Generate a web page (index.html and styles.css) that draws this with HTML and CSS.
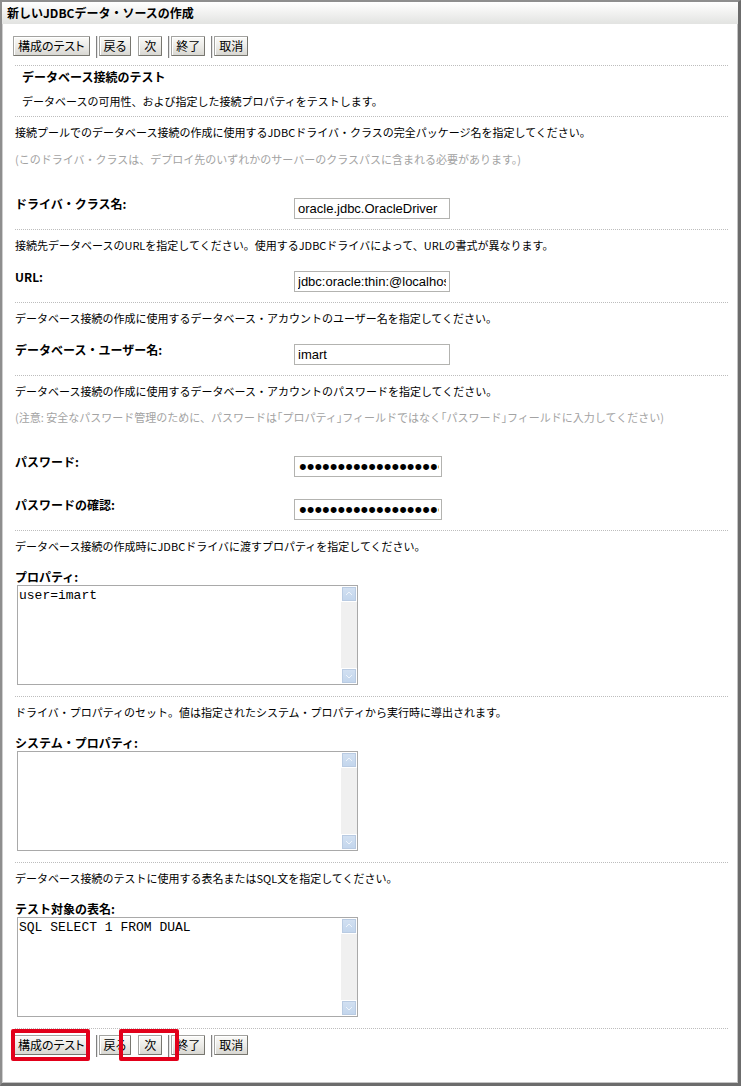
FILE: index.html
```html
<!DOCTYPE html>
<html lang="ja">
<head>
    <meta charset="UTF-8">
    <title>新しいJDBCデータ・ソースの作成</title>
    <link rel="stylesheet" href="styles.css">
</head>
<body>

<div class="window">
    <div class="titlebar">新しいJDBCデータ・ソースの作成</div>

    <div class="content">
        <div class="toolbar">
            <button class="btn">構成のテスト</button>
            <span class="divider"></span>
            <button class="btn">戻る</button>
            <button class="btn btn-next">次</button>
            <span class="divider"></span>
            <button class="btn">終了</button>
            <span class="divider"></span>
            <button class="btn">取消</button>
        </div>

        <div class="sep"></div>
        <div class="intro">
            <h2>データベース接続のテスト</h2>
            <p>データベースの可用性、および指定した接続プロパティをテストします。</p>
        </div>

        <!-- driver class -->
        <div class="sep"></div>
        <p class="desc">接続プールでのデータベース接続の作成に使用するJDBCドライバ・クラスの完全パッケージ名を指定してください。</p>
        <p class="note">(このドライバ・クラスは、デプロイ先のいずれかのサーバーのクラスパスに含まれる必要があります。)</p>
        <div class="field after-note">
            <label for="driver">ドライバ・クラス名:</label>
            <input type="text" id="driver" class="text-input" value="oracle.jdbc.OracleDriver">
        </div>

        <!-- url -->
        <div class="sep"></div>
        <p class="desc">接続先データベースのURLを指定してください。使用するJDBCドライバによって、URLの書式が異なります。</p>
        <div class="field">
            <label for="url">URL:</label>
            <input type="text" id="url" class="text-input" value="jdbc:oracle:thin:@localhost:1521:orcl">
        </div>

        <!-- user -->
        <div class="sep"></div>
        <p class="desc">データベース接続の作成に使用するデータベース・アカウントのユーザー名を指定してください。</p>
        <div class="field">
            <label for="user">データベース・ユーザー名:</label>
            <input type="text" id="user" class="text-input" value="imart">
        </div>

        <!-- password -->
        <div class="sep"></div>
        <p class="desc">データベース接続の作成に使用するデータベース・アカウントのパスワードを指定してください。</p>
        <p class="note note-tight">(注意: 安全なパスワード管理のために、パスワードは<span class="kakko">「プロパティ」</span>フィールドではなく<span class="kakko">「パスワード」</span>フィールドに入力してください)</p>
        <div class="field after-note field-pair">
            <label for="pass">パスワード:</label>
            <input type="password" id="pass" class="text-input pass-input" value="imartimartimartimart">
        </div>
        <div class="field">
            <label for="pass2">パスワードの確認:</label>
            <input type="password" id="pass2" class="text-input pass-input" value="imartimartimartimart">
        </div>

        <!-- properties -->
        <div class="sep"></div>
        <p class="desc">データベース接続の作成時にJDBCドライバに渡すプロパティを指定してください。</p>
        <div class="area-field">
            <label for="props">プロパティ:</label>
            <div class="textbox">
                <textarea id="props">user=imart</textarea>
                <div class="scrollbar">
                    <span class="scroll-btn"><svg width="14" height="14" viewBox="0 0 14 14"><path d="M4 8 L7 5 L10 8" fill="none" stroke="#eef4fb" stroke-width="1"/></svg></span>
                    <span class="scroll-btn"><svg width="14" height="14" viewBox="0 0 14 14"><path d="M4 6 L7 9 L10 6" fill="none" stroke="#eef4fb" stroke-width="1"/></svg></span>
                </div>
            </div>
        </div>

        <!-- system properties -->
        <div class="sep"></div>
        <p class="desc">ドライバ・プロパティのセット。値は指定されたシステム・プロパティから実行時に導出されます。</p>
        <div class="area-field">
            <label for="sysprops">システム・プロパティ:</label>
            <div class="textbox">
                <textarea id="sysprops"></textarea>
                <div class="scrollbar">
                    <span class="scroll-btn"><svg width="14" height="14" viewBox="0 0 14 14"><path d="M4 8 L7 5 L10 8" fill="none" stroke="#eef4fb" stroke-width="1"/></svg></span>
                    <span class="scroll-btn"><svg width="14" height="14" viewBox="0 0 14 14"><path d="M4 6 L7 9 L10 6" fill="none" stroke="#eef4fb" stroke-width="1"/></svg></span>
                </div>
            </div>
        </div>

        <!-- test table -->
        <div class="sep"></div>
        <p class="desc">データベース接続のテストに使用する表名またはSQL文を指定してください。</p>
        <div class="area-field">
            <label for="testtable">テスト対象の表名:</label>
            <div class="textbox">
                <textarea id="testtable">SQL SELECT 1 FROM DUAL</textarea>
                <div class="scrollbar">
                    <span class="scroll-btn"><svg width="14" height="14" viewBox="0 0 14 14"><path d="M4 8 L7 5 L10 8" fill="none" stroke="#eef4fb" stroke-width="1"/></svg></span>
                    <span class="scroll-btn"><svg width="14" height="14" viewBox="0 0 14 14"><path d="M4 6 L7 9 L10 6" fill="none" stroke="#eef4fb" stroke-width="1"/></svg></span>
                </div>
            </div>
        </div>

        <div class="sep"></div>
        <div class="toolbar toolbar-bottom">
            <button class="btn">構成のテスト</button>
            <span class="divider"></span>
            <button class="btn">戻る</button>
            <button class="btn btn-next">次</button>
            <span class="divider"></span>
            <button class="btn">終了</button>
            <span class="divider"></span>
            <button class="btn">取消</button>

            <!-- annotation boxes from the manual -->
            <span class="mark mark-test"></span>
            <span class="mark mark-next"></span>
        </div>
    </div>
</div>

</body>
</html>
```

FILE: styles.css
```css
body {
    margin: 0;
    background-color: #fff;
    color: #000;
    font-family: "Noto Sans CJK JP", "Liberation Sans", sans-serif;
}

.window {
    width: 741px;
    height: 1086px;
    box-sizing: border-box;
    border-style: solid;
    border-width: 2px 3px 3px 2px;
    border-color: #8e8e8e #6c6c6c #6c6c6c #8e8e8e;
    box-shadow: inset 1px 1px 0 #cfcfcf, inset -1px -1px 0 #c4c4c4;
}

.titlebar {
    height: 22px;
    line-height: 22px;
    padding-left: 5px;
    font-size: 12px;
    font-weight: bold;
    background: linear-gradient(#ffffff, #f4f4f3 40%, #e2e3e1);
}

.content {
    padding: 0 10px 0 13px;
}

/* button rows */
.toolbar {
    display: flex;
    align-items: flex-start;
    height: 22px;
    padding-top: 12px;
    margin-left: -2px;
    margin-bottom: 7px;
}

.toolbar-bottom {
    position: relative;
    padding-top: 6px;
    margin-bottom: 0;
}

.btn {
    height: 20px;
    min-width: 24px;
    padding: 0 4px;
    font-family: inherit;
    font-size: 12px;
    font-feature-settings: "palt";
    line-height: 18px;
    color: #000;
    background: linear-gradient(#fbfbf9, #e9e8e4 60%, #d8d7d2);
    border: 1px solid #a3a3a0;
    border-right-color: #77766f;
    border-bottom-color: #77766f;
    box-shadow: inset 1px 1px 0 #fff;
    border-radius: 1px;
    cursor: pointer;
}

.btn + .btn {
    margin-left: 7px;
}

.divider {
    width: 1px;
    height: 22px;
    margin: 0 1px 0 6px;
    background-color: #808080;
    border-right: 1px solid #e4e4e4;
}

.mark {
    position: absolute;
    top: 0;
    height: 32px;
    box-sizing: border-box;
    border: 4px solid #e2001a;
    border-radius: 2px;
}

.mark-test {
    left: -2px;
    width: 79px;
}

.mark-next {
    left: 106px;
    width: 60px;
}

.sep {
    border-top: 1px dotted #bdbdbd;
}

/* header of the step */
.intro {
    padding-left: 7px;
}

.intro h2 {
    margin: 1px 0 0;
    font-size: 12px;
    line-height: 20px;
}

.intro p {
    margin: 4px 0 5px;
    font-size: 11px;
    line-height: 20px;
}

.desc,
.note {
    margin: 3px 0 0;
    font-size: 11px;
    line-height: 24px;
    white-space: nowrap;
}

.note {
    color: #a3a3a3;
}

.note-tight {
    margin-top: 2px;
}

.kakko {
    font-feature-settings: "halt";
}

/* label + input rows */
.field {
    display: flex;
    align-items: flex-start;
    margin-top: 10px;
    padding-bottom: 10px;
}

.field.after-note {
    margin-top: 23px;
}

.field-pair {
    padding-bottom: 8px;
}

.field label,
.area-field label {
    font-size: 12px;
    font-weight: bold;
}

.field label {
    width: 279px;
    line-height: 20px;
}

.text-input {
    width: 156px;
    height: 21px;
    box-sizing: border-box;
    margin-top: 4px;
    padding: 0 3px;
    font-family: "Liberation Sans", sans-serif;
    font-size: 13px;
    color: #000;
    border: 1px solid #b3b3b0;
    background-color: #fff;
    outline: none;
}

.pass-input {
    width: 148px;
    padding: 0 2px 0 4px;
    font-size: 22px;
    line-height: 19px;
    letter-spacing: 0;
}

/* textareas with the old scrollbar */
.area-field {
    margin-top: 11px;
    padding-bottom: 11px;
}

.area-field label {
    display: block;
    line-height: 16px;
}

.textbox {
    display: flex;
    width: 341px;
    height: 100px;
    box-sizing: border-box;
    margin-left: 2px;
    border: 1px solid #a9a9a9;
    background-color: #fff;
}

.textbox textarea {
    flex: 1;
    margin: 0;
    padding: 2px 1px;
    border: none;
    resize: none;
    outline: none;
    overflow: hidden;
    font-family: "Liberation Mono", monospace;
    font-size: 13px;
    line-height: 16px;
    color: #000;
}

.scrollbar {
    width: 16px;
    display: flex;
    flex-direction: column;
    justify-content: space-between;
    background-color: #f0f0f0;
}

.scroll-btn {
    width: 16px;
    height: 16px;
    box-sizing: border-box;
    display: flex;
    align-items: center;
    justify-content: center;
    background: linear-gradient(#d3e1f2, #c2d5ec);
    border: 1px solid #fff;
    box-shadow: 0 0 0 1px #b9cbe2 inset;
}
```
